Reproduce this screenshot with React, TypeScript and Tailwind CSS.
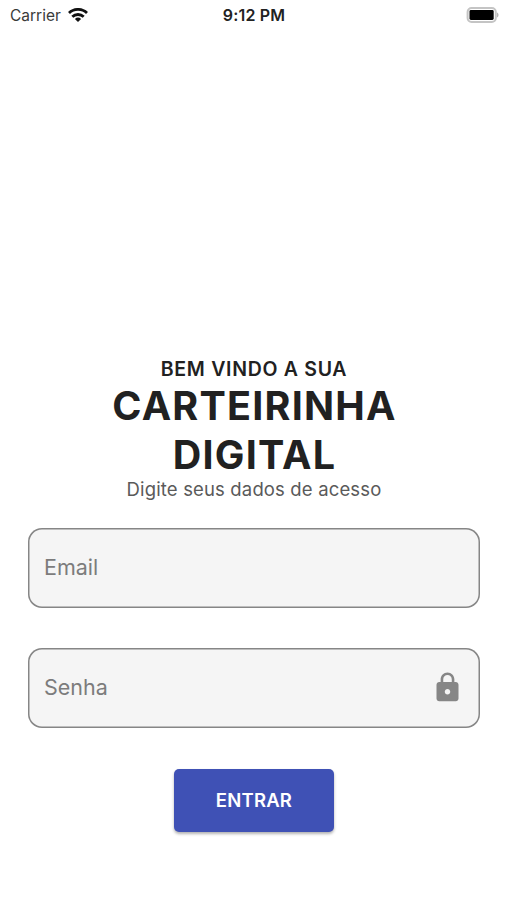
import { useState } from "react";
import { MdLock } from "react-icons/md";

function StatusBar() {
  return (
    <header className="grid h-[30px] grid-cols-3 items-center pl-2.5 pr-2 text-[#222]">
      <div className="flex items-center gap-[7px]">
        <span className="pt-px text-[15.5px] leading-5 text-[#3a3a3a]">Carrier</span>
        <svg width="20" height="14" viewBox="0 0 20 14" fill="none" stroke="#111" strokeWidth="2.8">
          <path d="M1 5a13 13 0 0 1 18 0" />
          <path d="M4.3 8.8a8.2 8.2 0 0 1 11.4 0" />
          <path d="M10 14l-3.1-3.1a4.5 4.5 0 0 1 6.2 0z" fill="#111" stroke="none" />
        </svg>
      </div>
      <span className="pr-px text-center text-[16px] font-semibold leading-5 tracking-[0.2px]">9:12 PM</span>
      <svg className="justify-self-end" width="33" height="16" viewBox="0 0 33 16">
        <rect x="1.6" y="1.1" width="28.2" height="13.8" rx="4" fill="#fff" stroke="#c4c4c4" strokeWidth="2" />
        <rect x="3.5" y="3" width="24.2" height="10" rx="1.4" fill="#000" />
        <path d="M31 5.5c2 .8 2 4.2 0 5z" fill="#b5b5b5" />
      </svg>
    </header>
  );
}

interface FieldProps {
  type: string;
  placeholder: string;
  icon?: React.ReactNode;
}

function Field({ type, placeholder, icon }: FieldProps) {
  const [value, setValue] = useState("");

  return (
    <label className="flex h-[79.5px] items-center rounded-[14px] bg-[#f5f5f5] pl-4 pr-4 shadow-[inset_0_0_0_1.5px_#868686]">
      <input
        type={type}
        value={value}
        onChange={(e) => setValue(e.target.value)}
        placeholder={placeholder}
        className="min-w-0 flex-1 bg-transparent pb-0.5 text-[21.5px] text-[#222] outline-none placeholder:text-[#7c7c7c]"
      />
      {icon}
    </label>
  );
}

export default function App() {
  return (
    <div className="flex min-h-[900px] flex-col bg-white font-['Inter',sans-serif]">
      <StatusBar />

      <main className="flex flex-col pl-7 pr-[27px] pt-[327px]">
        {/* Title */}
        <div className="flex flex-col items-center text-center text-[#212121]">
          <p className="text-[19.5px] font-semibold leading-6 tracking-[0.7px]">BEM VINDO A SUA</p>
          <h1 className="w-[321px] pl-px pt-px text-[39.5px] font-bold leading-[49px] tracking-[1.2px]">
            CARTEIRINHA DIGITAL
          </h1>
          <p className="-mt-[3px] text-[18.5px] leading-6 tracking-[0.15px] text-[#5a5a5a]">
            Digite seus dados de acesso
          </p>
        </div>

        {/* Login form */}
        <form className="mt-[27px] flex flex-col gap-[40.5px]" onSubmit={(e) => e.preventDefault()}>
          <Field type="email" placeholder="Email" />
          <Field type="password" placeholder="Senha" icon={<MdLock size={33} color="#868686" />} />
          <button
            type="submit"
            className="mt-[0.5px] h-[63px] w-[160px] self-center rounded-[5px] bg-[#3f51b5] pt-px text-[18.5px] font-semibold tracking-[0.2px] text-white shadow-[0_2px_3px_rgba(0,0,0,0.3)]"
          >
            ENTRAR
          </button>
        </form>
      </main>
    </div>
  );
}
